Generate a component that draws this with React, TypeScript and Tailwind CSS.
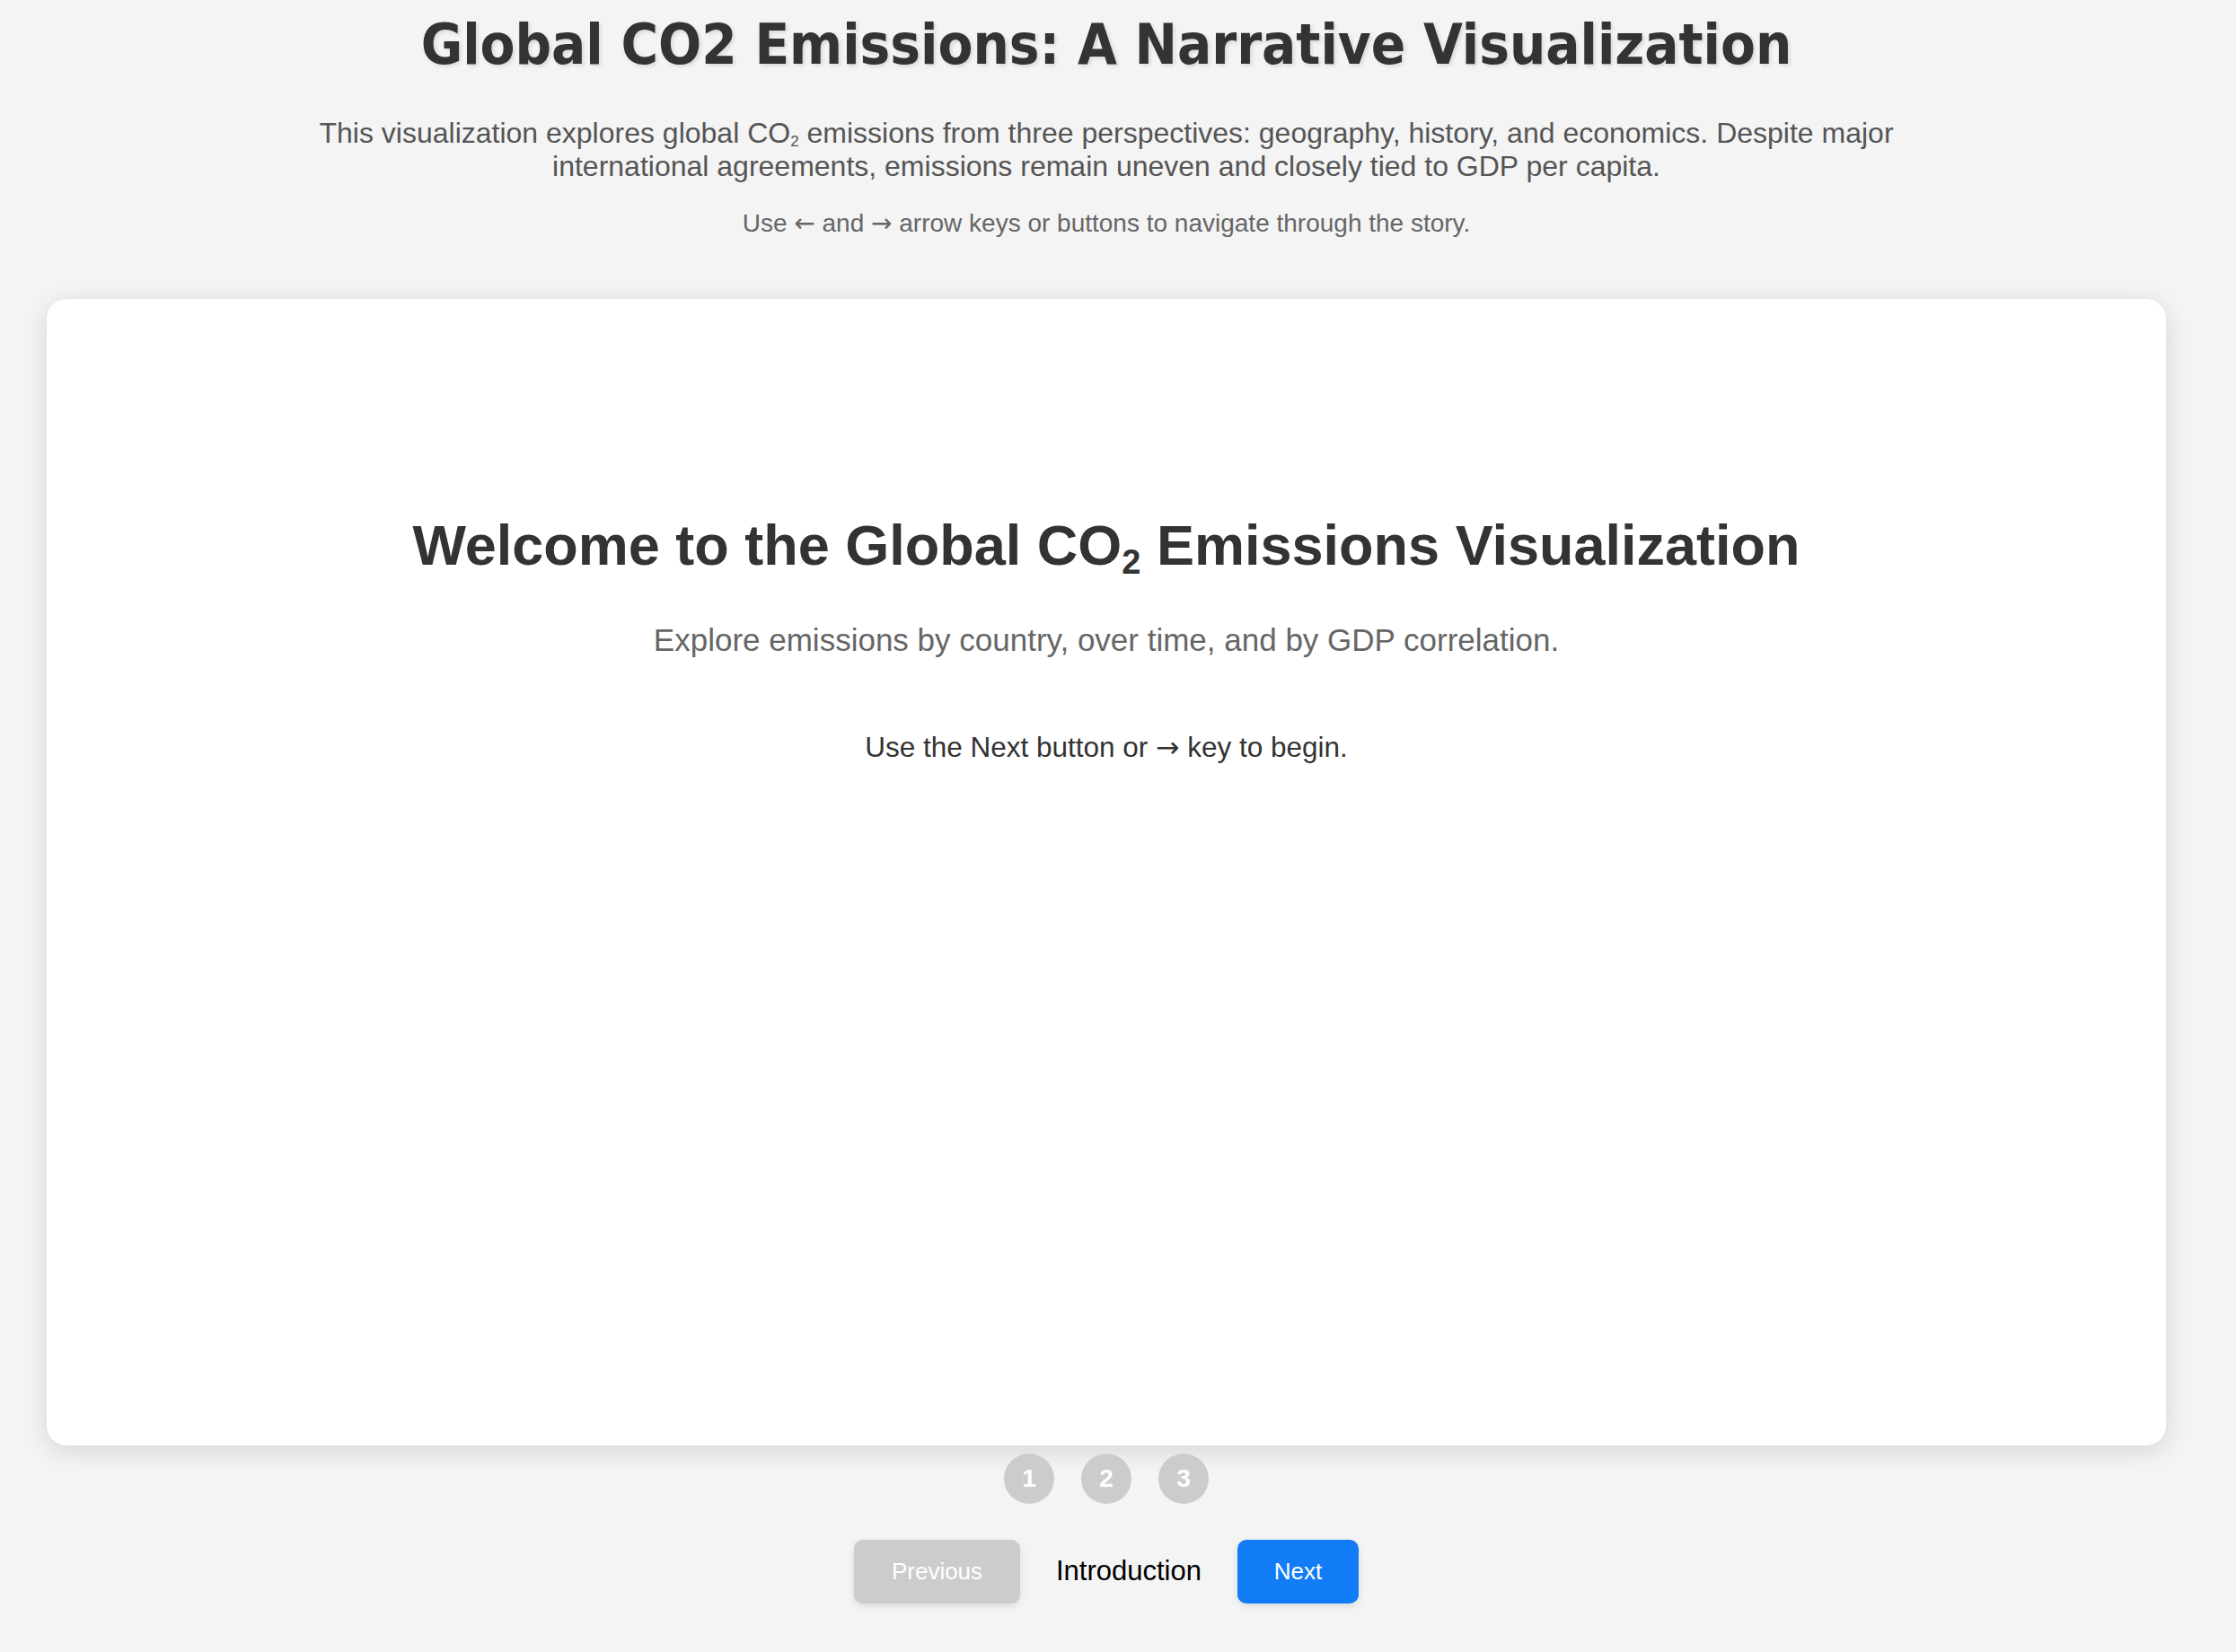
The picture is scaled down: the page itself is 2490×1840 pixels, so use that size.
import React from 'react';

const steps = [1, 2, 3];

const Arrow = ({ children }: { children: React.ReactNode }) => (
  <span className="font-['DejaVu_Sans',sans-serif]">{children}</span>
);

export default function App() {
  return (
    <div className="min-h-screen bg-[#f4f4f4] font-['Liberation_Sans',Arial,sans-serif]">
      <div className="ml-[52px] w-[2360px] flex flex-col items-center">
        <h1 className="mt-[14px] font-['DejaVu_Sans_Condensed','DejaVu_Sans',sans-serif] text-[63px] leading-[72px] font-bold text-[#333] [text-shadow:2px_2px_4px_rgba(0,0,0,0.12)]">
          Global CO2 Emissions: A Narrative Visualization
        </h1>

        <p className="mt-[44px] max-w-[1800px] text-center text-[32px] leading-[37px] text-[#555]">
          This visualization explores global CO<sub className="text-[17px]">2</sub> emissions from three perspectives: geography, history, and
          economics. Despite major international agreements, emissions remain uneven and closely tied to GDP per capita.
        </p>
        <p className="mt-[28px] text-[28px] leading-[34px] text-[#666]">
          Use <Arrow>←</Arrow> and <Arrow>→</Arrow> arrow keys or buttons to navigate through the story.
        </p>

        <div className="mt-[67px] w-full h-[1277px] rounded-[22px] bg-white shadow-[0_6px_28px_rgba(0,0,0,0.13)] flex flex-col items-center pt-[234px]">
          <h2 className="text-[63px] leading-[80px] font-bold text-[#333]">
            Welcome to the Global CO<sub className="text-[38px]">2</sub> Emissions Visualization
          </h2>
          <p className="mt-[45px] text-[35px] leading-[42px] text-[#666]">
            Explore emissions by country, over time, and by GDP correlation.
          </p>
          <p className="mt-[80px] text-[31.5px] leading-[36px] text-[#333]">
            Use the Next button or <Arrow>→</Arrow> key to begin.
          </p>
        </div>

        <div className="mt-[9px] flex gap-[30px]">
          {steps.map((n) => (
            <div
              key={n}
              className="w-[56px] h-[56px] rounded-full bg-[#ccc] flex items-center justify-center text-[28px] font-bold text-white"
            >
              {n}
            </div>
          ))}
        </div>

        <div className="mt-[40px] flex items-center gap-[40px]">
          <button className="w-[185px] h-[71px] rounded-[10px] bg-[#ccc] text-[26px] text-white shadow-[0_3px_8px_rgba(0,0,0,0.1)]">
            Previous
          </button>
          <span className="text-[31px] text-black">Introduction</span>
          <button className="w-[135px] h-[71px] rounded-[10px] bg-[#127cf7] text-[26px] text-white shadow-[0_3px_8px_rgba(0,0,0,0.1)]">
            Next
          </button>
        </div>
      </div>
    </div>
  );
}
